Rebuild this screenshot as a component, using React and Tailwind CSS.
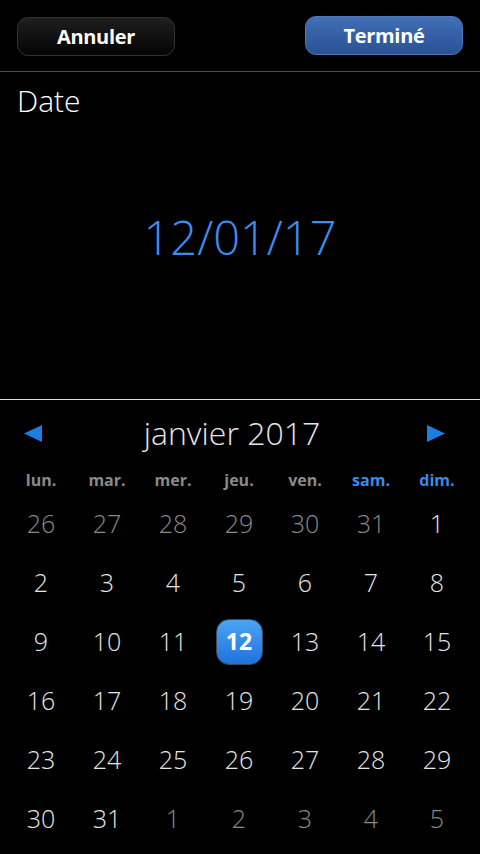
import React from "react";

const weeks = [
  [["26", 0], ["27", 0], ["28", 0], ["29", 0], ["30", 0], ["31", 0], ["1", 1]],
  [["2", 1], ["3", 1], ["4", 1], ["5", 1], ["6", 1], ["7", 1], ["8", 1]],
  [["9", 1], ["10", 1], ["11", 1], ["12", 2], ["13", 1], ["14", 1], ["15", 1]],
  [["16", 1], ["17", 1], ["18", 1], ["19", 1], ["20", 1], ["21", 1], ["22", 1]],
  [["23", 1], ["24", 1], ["25", 1], ["26", 1], ["27", 1], ["28", 1], ["29", 1]],
  [["30", 1], ["31", 1], ["1", 0], ["2", 0], ["3", 0], ["4", 0], ["5", 0]],
];

const days = [
  ["lun.", false],
  ["mar.", false],
  ["mer.", false],
  ["jeu.", false],
  ["ven.", false],
  ["sam.", true],
  ["dim.", true],
];

export default function App() {
  return (
    <div
      className="w-[480px] h-[854px] bg-black overflow-hidden flex flex-col"
      style={{ fontFamily: '"Open Sans", "DejaVu Sans", sans-serif' }}
    >
      {/* header */}
      <div className="h-[71px] flex items-center justify-between px-[17px] shrink-0">
        <div className="w-[158px] h-[39px] mt-[2px] rounded-[11px] border border-[#333] bg-gradient-to-b from-[#1f1f1f] to-[#050505] flex items-center justify-center text-white font-bold text-[20px] tracking-[-0.3px]">
          Annuler
        </div>
        <div className="w-[158px] h-[39px] rounded-[11px] border border-[#4f78b8] bg-gradient-to-b from-[#416fb6] to-[#2a5196] flex items-center justify-center text-white font-bold text-[20px] tracking-[-0.3px]">
          Terminé
        </div>
      </div>
      <div className="h-px bg-[#4a4a4a] shrink-0" />
      {/* date section */}
      <div className="h-[327px] shrink-0 flex flex-col">
        <div className="pl-[17px] pt-[9px] h-[40px] leading-[40px] text-[30px] font-light text-white">
          Date
        </div>
        <div className="mt-[95px] text-center text-[47px] leading-[60px] font-light text-[#3d8ef0]">
          12/01/17
        </div>
      </div>
      <div className="h-px bg-[#dcdcdc] shrink-0" />
      {/* calendar */}
      <div className="flex flex-col">
        <div className="h-[66px] flex items-center justify-between pl-[24px] pr-[35px]">
          <svg width="18" height="17" viewBox="0 0 18 17">
            <polygon points="18,0 18,17 0,8.5" fill="#1a7fe0" />
          </svg>
          <div className="text-[32px] font-light text-[#e6e6e6] leading-[40px] -ml-[5px]">
            janvier 2017
          </div>
          <svg width="18" height="17" viewBox="0 0 18 17">
            <polygon points="0,0 0,17 18,8.5" fill="#1a7fe0" />
          </svg>
        </div>
        <div className="pl-[8px] w-[470px] grid grid-cols-7 h-[28px] items-center">
          {days.map(([d, blue]) => (
            <div
              key={d}
              className={
                "text-center text-[16px] font-bold " +
                (blue ? "text-[#3d8be8]" : "text-[#8a8a8a]")
              }
            >
              {d}
            </div>
          ))}
        </div>
        {weeks.map((w, i) => (
          <div key={i} className="pl-[8px] w-[470px] grid grid-cols-7 h-[59px] items-center">
            {w.map(([n, t], j) => (
              <div key={j} className="flex items-center justify-center">
                {t === 2 ? (
                  <div className="w-[47px] h-[46px] rounded-[13px] border border-[#3a4a5a] bg-gradient-to-b from-[#4ba4f3] to-[#1f72dc] flex items-center justify-center text-white font-bold text-[23px]">
                    {n}
                  </div>
                ) : (
                  <span
                    className={
                      "text-[25px] font-light " +
                      (t === 1 ? "text-[#e6e6e6]" : "text-[#8a8a8a]")
                    }
                  >
                    {n}
                  </span>
                )}
              </div>
            ))}
          </div>
        ))}
      </div>
    </div>
  );
}
